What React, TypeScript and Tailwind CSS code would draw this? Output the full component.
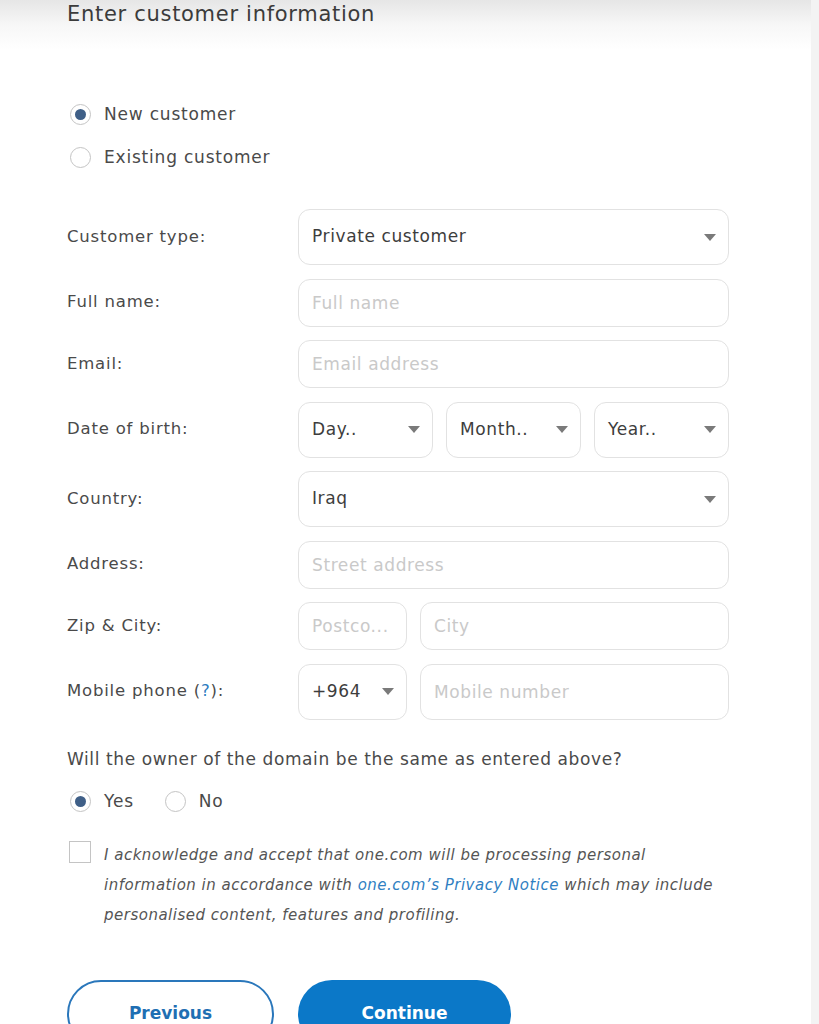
import React, { useState } from 'react';

const font = { fontFamily: '"DejaVu Sans", "Open Sans", sans-serif' };

const Caret = () => (
  <svg width="12" height="7" viewBox="0 0 12 7" className="shrink-0">
    <path d="M0 0 L12 0 L6 7 Z" fill="#7a7a7a" />
  </svg>
);

const Radio = ({ checked, label, onClick }: { checked: boolean; label: string; onClick: () => void }) => (
  <button type="button" onClick={onClick} className="flex items-center gap-[13px] text-[17px] leading-[25px] tracking-[0.8px] text-[#4a4a4a]">
    <span className="w-[21px] h-[21px] rounded-full border border-[#c4c4c4] bg-white flex items-center justify-center">
      {checked && <span className="w-[11px] h-[11px] rounded-full bg-[#3f5f87]" />}
    </span>
    <span>{label}</span>
  </button>
);

const SelectBox = ({ value, className = '' }: { value: string; className?: string }) => (
  <div className={`h-[56px] border border-[#e2e2e2] rounded-[12px] flex items-center justify-between pl-[13px] pr-[12px] text-[17px] tracking-[0.6px] text-[#3d3d3d] bg-white ${className}`}>
    <span>{value}</span>
    <Caret />
  </div>
);

const TextBox = ({ placeholder, className = '' }: { placeholder: string; className?: string }) => (
  <input
    placeholder={placeholder}
    className={`h-[48px] border border-[#e2e2e2] rounded-[12px] px-[13px] text-[17px] tracking-[0.6px] text-[#3d3d3d] placeholder-[#c9c9c9] bg-white outline-none min-w-0 ${className}`}
  />
);

const Row = ({ label, children }: { label: React.ReactNode; children: React.ReactNode }) => (
  <div className="flex items-center">
    <div className="w-[231px] shrink-0 text-[16.5px] tracking-[0.8px] text-[#4a4a4a]">{label}</div>
    <div className="w-[431px] flex gap-[13px]">{children}</div>
  </div>
);

const App: React.FC = () => {
  const [customer, setCustomer] = useState('new');
  const [owner, setOwner] = useState('yes');
  const [agree, setAgree] = useState(false);

  return (
    <div className="flex min-h-[1024px] bg-white" style={font}>
      <div className="flex-1 relative">
        <div className="bg-linear-to-b from-[#e6e6e6] via-[#f7f7f7] to-white h-[50px] px-[67px]">
          <h1 className="text-[21px] leading-[28px] tracking-[0.7px] text-[#3b3b3b]">Enter customer information</h1>
        </div>

        <div className="px-[67px]">
          <div className="mt-[52px] flex flex-col gap-[18px] pl-[3px]">
            <Radio checked={customer === 'new'} label="New customer" onClick={() => setCustomer('new')} />
            <Radio checked={customer === 'existing'} label="Existing customer" onClick={() => setCustomer('existing')} />
          </div>

          <div className="mt-[39px] flex flex-col gap-[13.5px]">
            <Row label="Customer type:">
              <SelectBox value="Private customer" className="flex-1" />
            </Row>
            <Row label="Full name:">
              <TextBox placeholder="Full name" className="flex-1" />
            </Row>
            <Row label="Email:">
              <TextBox placeholder="Email address" className="flex-1" />
            </Row>
            <Row label="Date of birth:">
              <SelectBox value="Day.." className="flex-1" />
              <SelectBox value="Month.." className="flex-1" />
              <SelectBox value="Year.." className="flex-1" />
            </Row>
            <Row label="Country:">
              <SelectBox value="Iraq" className="flex-1" />
            </Row>
            <Row label="Address:">
              <TextBox placeholder="Street address" className="flex-1" />
            </Row>
            <Row label="Zip & City:">
              <TextBox placeholder="Postco..." className="w-[109px]" />
              <TextBox placeholder="City" className="flex-1" />
            </Row>
            <Row
              label={
                <span>
                  Mobile phone (<span className="text-[#2b7bbf]">?</span>):
                </span>
              }
            >
              <SelectBox value="+964" className="w-[109px]" />
              <TextBox placeholder="Mobile number" className="flex-1 h-[56px]" />
            </Row>
          </div>

          <p className="mt-[27px] text-[17px] leading-[25px] tracking-[0.6px] text-[#4a4a4a]">Will the owner of the domain be the same as entered above?</p>
          <div className="mt-[17px] flex gap-[31px] pl-[3px]">
            <Radio checked={owner === 'yes'} label="Yes" onClick={() => setOwner('yes')} />
            <Radio checked={owner === 'no'} label="No" onClick={() => setOwner('no')} />
          </div>

          <div className="mt-[26px] flex gap-[13px]">
            <button
              type="button"
              onClick={() => setAgree(!agree)}
              className="w-[22px] h-[22px] ml-[2px] mt-[1px] shrink-0 border border-[#c4c4c4] bg-white flex items-center justify-center"
            >
              {agree && <span className="w-[12px] h-[12px] bg-[#3f5f87]" />}
            </button>
            <p className="italic text-[15px] leading-[30px] tracking-[0.5px] text-[#555] whitespace-nowrap">
              I acknowledge and accept that one.com will be processing personal
              <br />
              information in accordance with <a className="text-[#2f80c2]">one.com’s Privacy Notice</a> which may include
              <br />
              personalised content, features and profiling.
            </p>
          </div>

          <div className="mt-[50px] flex gap-[24px]">
            <button className="w-[207px] h-[68px] rounded-full border-2 border-[#2a77bb] text-[#1f6fb3] font-bold text-[17px]">
              Previous
            </button>
            <button className="w-[213px] h-[68px] rounded-full bg-[#0b78c8] text-white font-bold text-[17px]">
              Continue
            </button>
          </div>
        </div>
      </div>
      <div className="w-[8px] bg-[#f3f3f3] shrink-0" />
    </div>
  );
};

export default App;
